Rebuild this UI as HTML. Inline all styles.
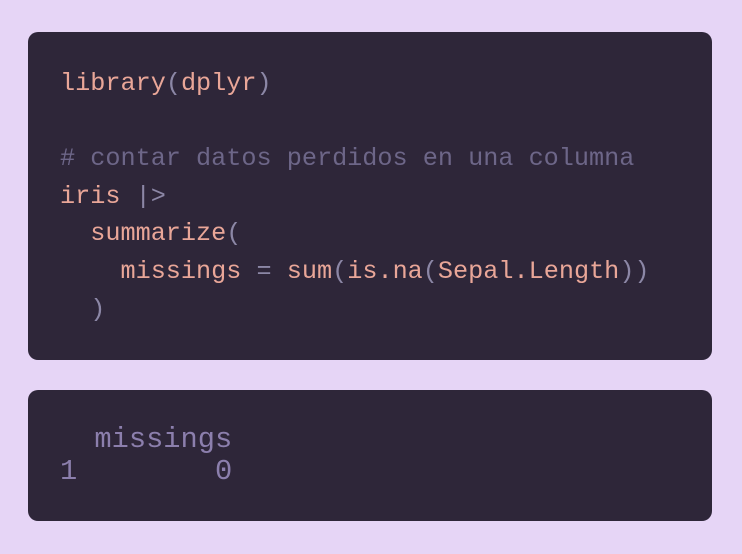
<!DOCTYPE html>
<html><head><style>
body{margin:0;width:742px;height:554px;background:#e6d5f6;position:relative;overflow:hidden;font-family:"Liberation Mono",monospace}
.c{position:absolute;left:28px;width:684px;background:#2e2639;border-radius:10px}
pre{margin:0;font-family:"Liberation Mono",monospace;white-space:pre}
.a{top:32px;height:328px}
.b{top:390px;height:131px}
.k{color:#6d6688}.p{color:#8c87a6}
.o{position:absolute;left:60px;font-size:28.7px;line-height:32px;color:#8c7fad}
</style></head><body>
<div class="c a"></div>
<pre style="position:absolute;left:60px;top:65px;font-size:25.2px;line-height:37.6px;color:#e9a698">library<span class="p">(</span>dplyr<span class="p">)</span>

<span class="k"># contar datos perdidos en una columna</span>
iris <span class="p">|&gt;</span>
  summarize<span class="p">(</span>
    missings <span class="p">=</span> sum<span class="p">(</span>is.na<span class="p">(</span>Sepal.Length<span class="p">))</span>
  <span class="p">)</span></pre>
<div class="c b"></div>
<pre class="o" style="top:424px">  missings
1        0</pre>
</body></html>
